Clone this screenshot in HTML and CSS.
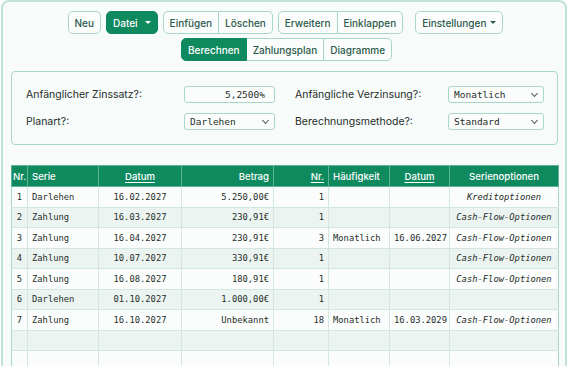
FILE: index.html
```html
<!DOCTYPE html>
<html lang="de">
<head>
<meta charset="utf-8">
<title>Kreditrechner</title>
<link rel="stylesheet" href="styles.css">
</head>
<body>
<div class="app">
  <div class="toolbar">
    <button class="btn">Neu</button>
    <button class="btn primary">Datei <span class="caret"></span></button>
    <div class="group">
      <button class="btn">Einfügen</button>
      <button class="btn">Löschen</button>
    </div>
    <div class="group">
      <button class="btn">Erweitern</button>
      <button class="btn">Einklappen</button>
    </div>
    <button class="btn gap-left tight">Einstellungen <span class="caret dark"></span></button>
  </div>
  <div class="toolbar second">
    <div class="group">
      <button class="btn primary">Berechnen</button>
      <button class="btn">Zahlungsplan</button>
      <button class="btn">Diagramme</button>
    </div>
  </div>

  <div class="settings">
    <label class="lbl">Anfänglicher Zinssatz?:</label>
    <div class="field num">5,2500%</div>
    <label class="lbl">Anfängliche Verzinsung?:</label>
    <div class="field sel">Monatlich<span class="chev"></span></div>
    <label class="lbl">Planart?:</label>
    <div class="field sel">Darlehen<span class="chev"></span></div>
    <label class="lbl">Berechnungsmethode?:</label>
    <div class="field sel">Standard<span class="chev"></span></div>
  </div>

  <table class="grid">
    <colgroup>
      <col class="c1"><col class="c2"><col class="c3"><col class="c4"><col class="c5"><col class="c6"><col class="c7"><col class="c8">
    </colgroup>
    <thead>
      <tr>
        <th class="ctr">Nr.</th>
        <th class="l">Serie</th>
        <th class="ctr"><u>Datum</u></th>
        <th class="r">Betrag</th>
        <th class="r"><u>Nr.</u></th>
        <th class="l">Häufigkeit</th>
        <th class="ctr"><u>Datum</u></th>
        <th class="ctr">Serienoptionen</th>
      </tr>
    </thead>
    <tbody>
      <tr><td class="ctr">1</td><td class="l">Darlehen</td><td class="ctr">16.02.2027</td><td class="r">5.250,00€</td><td class="r">1</td><td class="l"></td><td class="ctr"></td><td class="ctr it">Kreditoptionen</td></tr>
      <tr><td class="ctr">2</td><td class="l">Zahlung</td><td class="ctr">16.03.2027</td><td class="r">230,91€</td><td class="r">1</td><td class="l"></td><td class="ctr"></td><td class="ctr it">Cash-Flow-Optionen</td></tr>
      <tr><td class="ctr">3</td><td class="l">Zahlung</td><td class="ctr">16.04.2027</td><td class="r">230,91€</td><td class="r">3</td><td class="l">Monatlich</td><td class="ctr">16.06.2027</td><td class="ctr it">Cash-Flow-Optionen</td></tr>
      <tr><td class="ctr">4</td><td class="l">Zahlung</td><td class="ctr">10.07.2027</td><td class="r">330,91€</td><td class="r">1</td><td class="l"></td><td class="ctr"></td><td class="ctr it">Cash-Flow-Optionen</td></tr>
      <tr><td class="ctr">5</td><td class="l">Zahlung</td><td class="ctr">16.08.2027</td><td class="r">180,91€</td><td class="r">1</td><td class="l"></td><td class="ctr"></td><td class="ctr it">Cash-Flow-Optionen</td></tr>
      <tr><td class="ctr">6</td><td class="l">Darlehen</td><td class="ctr">01.10.2027</td><td class="r">1.000,00€</td><td class="r">1</td><td class="l"></td><td class="ctr"></td><td class="ctr it"></td></tr>
      <tr><td class="ctr">7</td><td class="l">Zahlung</td><td class="ctr">16.10.2027</td><td class="r">Unbekannt</td><td class="r">18</td><td class="l">Monatlich</td><td class="ctr">16.03.2029</td><td class="ctr it">Cash-Flow-Optionen</td></tr>
      <tr><td></td><td></td><td></td><td></td><td></td><td></td><td></td><td></td></tr>
      <tr><td></td><td></td><td></td><td></td><td></td><td></td><td></td><td></td></tr>
    </tbody>
  </table>
</div>
</body>
</html>
```

FILE: styles.css
```css
* { box-sizing: border-box; }
html, body { margin: 0; padding: 0; background: #ffffff; }
body {
  font-family: Inter, "Noto Sans", sans-serif;
  color: #1f2d29;
  overflow: hidden;
}
.app {
  margin: 0 3px 0 1px;
  height: 380px;
  border: 2px solid #bfe3d8;
  border-bottom: none;
  border-radius: 8px 8px 0 0;
  background: #f7fbfa;
  padding: 9px 7px 0 8px;
}
.toolbar {
  display: flex;
  justify-content: center;
  gap: 5px;
  margin-left: 2px;
}
.toolbar.second { margin-top: 4px; margin-left: 4px; }
.group { display: flex; }
.group .btn { border-radius: 0; }
.group .btn + .btn { border-left: none; }
.group .btn:first-child { border-radius: 5px 0 0 5px; }
.group .btn:last-child { border-radius: 0 5px 5px 0; }
.gap-left { margin-left: 7px; }
.btn {
  font-family: Inter, "Noto Sans", sans-serif;
  font-size: 10px;
  font-weight: 500;
  color: #2c5a4c;
  background: #fbfdfc;
  border: 1px solid #a9d6c7;
  border-radius: 5px;
  height: 23px;
  padding: 0 6px;
  display: flex;
  align-items: center;
  gap: 7px;
  cursor: pointer;
}
.btn.tight { gap: 4px; padding: 0 6px; }
.btn.primary {
  background: #0f8a5f;
  border-color: #0f8a5f;
  color: #ffffff;
}
.caret {
  width: 0; height: 0;
  border-left: 3px solid transparent;
  border-right: 3px solid transparent;
  border-top: 3px solid #ffffff;
}
.caret.dark { border-top-color: #2c5a4c; }

.settings {
  margin-top: 10px;
  border: 1px solid #a9d6c7;
  border-radius: 4px;
  background: #f7fbfa;
  padding: 14px;
  display: grid;
  grid-template-columns: 158px 91px 173px 96px;
  row-gap: 10px;
  align-items: center;
}
.settings .lbl:nth-of-type(2), .settings .lbl:nth-of-type(4) { padding-left: 20px; }
.lbl {
  font-size: 10.5px;
  color: #1f2d29;
}
.field {
  height: 17px;
  border: 1px solid #a9d6c7;
  border-radius: 3px;
  background: #fbfdfc;
  font-family: "DejaVu Sans Mono", monospace;
  font-size: 9.5px;
  color: #1f2d29;
  display: flex;
  align-items: center;
  padding: 0 5px;
}
.field.num { justify-content: flex-end; padding-right: 9px; }
.field.sel { justify-content: space-between; }
.chev {
  width: 5px; height: 5px;
  border-right: 1px solid #4d5f59;
  border-bottom: 1px solid #4d5f59;
  transform: rotate(45deg);
  margin-top: -3px;
  margin-right: 1px;
}

.grid {
  margin-top: 20px;
  width: 547px;
  border-collapse: collapse;
  table-layout: fixed;
  font-family: "DejaVu Sans Mono", monospace;
  font-size: 8.8px;
  color: #1f2d29;
}
.c1 { width: 16px; } .c2 { width: 71px; } .c3 { width: 83px; } .c4 { width: 92px; }
.c5 { width: 55px; } .c6 { width: 61px; } .c7 { width: 60px; } .c8 { width: 109px; }
.grid th {
  background: #0f8a5f;
  color: #ffffff;
  font-family: Inter, "Noto Sans", sans-serif;
  font-weight: 500;
  font-size: 9.6px;
  height: 21px;
  border: 1px solid #5fb394;
  padding: 0 4px;
  white-space: nowrap;
}
.grid th:first-child { padding: 0 1px; }
.grid th u { text-decoration-thickness: 1px; text-underline-offset: 2px; }
.grid td {
  height: 20.5px;
  border: 1px solid #d3e6e0;
  padding: 0 4px;
  white-space: nowrap;
}
.grid tbody tr:nth-child(odd) td { background: #fbfdfc; }
.grid tbody tr:nth-child(even) td { background: #ebf4f1; }
.grid tbody tr:first-child td { border-top-color: #5fb394; }
.grid td:first-child { border-left-color: #a9d6c7; }
.grid td:last-child { border-right-color: #a9d6c7; }
.l { text-align: left; }
.r { text-align: right; }
.ctr { text-align: center; }
.it { font-style: italic; }
```
